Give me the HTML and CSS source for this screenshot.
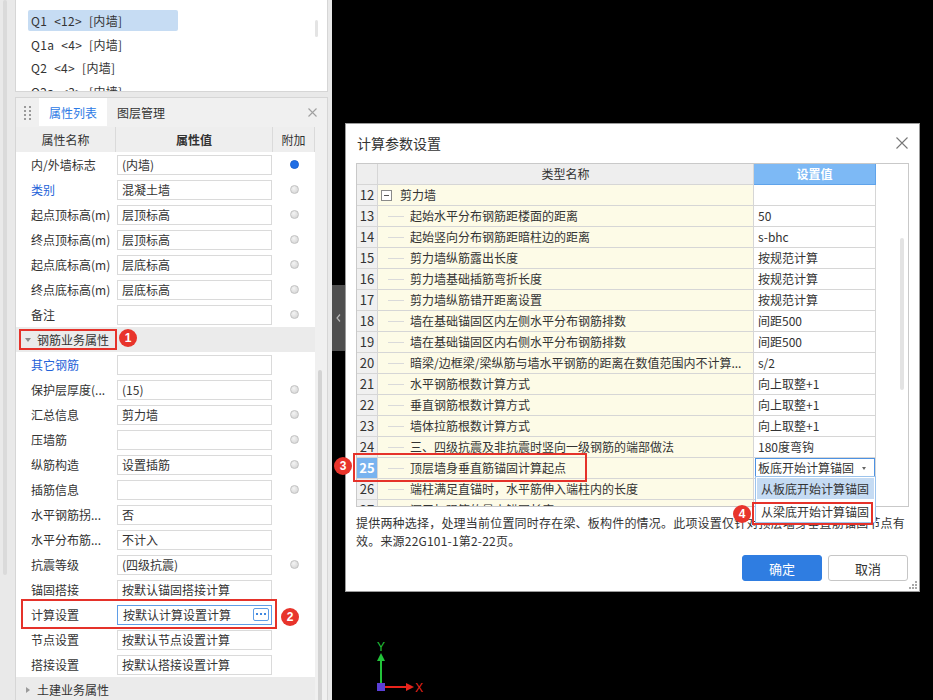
FILE: index.html
```html
<!DOCTYPE html>
<html lang="zh-CN">
<head>
<meta charset="utf-8">
<title>计算参数设置</title>
<link rel="stylesheet" href="styles.css">
</head>
<body>
<div class="app">
  <aside class="side">
    <div class="rail"><i class="rail-thumb"></i></div>
    <div class="side-main">
      <div class="list">
        <div class="list-items">
          <div class="li sel">Q1 &lt;12&gt; [内墙]</div>
          <div class="li">Q1a &lt;4&gt; [内墙]</div>
          <div class="li">Q2 &lt;4&gt; [内墙]</div>
          <div class="li">Q2a &lt;3&gt; [内墙]</div>
        </div>
        <div class="list-scroll"><i></i></div>
      </div>
      <div class="props">
        <div class="tabs">
          <span class="grip"><svg width="8" height="15" viewBox="0 0 8 15"><g fill="#9a9a9a"><rect x="0" y="0" width="2" height="2"/><rect x="5" y="0" width="2" height="2"/><rect x="0" y="4" width="2" height="2"/><rect x="5" y="4" width="2" height="2"/><rect x="0" y="8" width="2" height="2"/><rect x="5" y="8" width="2" height="2"/><rect x="0" y="12" width="2" height="2"/><rect x="5" y="12" width="2" height="2"/></g></svg></span>
          <span class="tab on">属性列表</span>
          <span class="tab">图层管理</span>
          <span class="tclose"><svg width="9" height="9" viewBox="0 0 9 9"><path d="M0.5 0.5L8.5 8.5M8.5 0.5L0.5 8.5" stroke="#a0a0a0" stroke-width="1.1"/></svg></span>
        </div>
        <div class="pbody">
          <div class="pgrid">
            <div class="prow phead"><span>属性名称</span><span class="bold">属性值</span><span>附加</span></div>
            <div class="prow"><span class="lab">内/外墙标志</span><span class="val">(内墙)</span><span class="add"><i class="dot on"></i></span></div>
            <div class="prow"><span class="lab blue">类别</span><span class="val">混凝土墙</span><span class="add"><i class="dot"></i></span></div>
            <div class="prow"><span class="lab">起点顶标高(m)</span><span class="val">层顶标高</span><span class="add"><i class="dot"></i></span></div>
            <div class="prow"><span class="lab">终点顶标高(m)</span><span class="val">层顶标高</span><span class="add"><i class="dot"></i></span></div>
            <div class="prow"><span class="lab">起点底标高(m)</span><span class="val">层底标高</span><span class="add"><i class="dot"></i></span></div>
            <div class="prow"><span class="lab">终点底标高(m)</span><span class="val">层底标高</span><span class="add"><i class="dot"></i></span></div>
            <div class="prow"><span class="lab">备注</span><span class="val"></span><span class="add"><i class="dot"></i></span></div>
            <div class="pgrp"><i class="caret-down"></i><span>钢筋业务属性</span></div>
            <div class="prow"><span class="lab blue">其它钢筋</span><span class="val"></span><span class="add"></span></div>
            <div class="prow"><span class="lab">保护层厚度(...</span><span class="val">(15)</span><span class="add"><i class="dot"></i></span></div>
            <div class="prow"><span class="lab">汇总信息</span><span class="val">剪力墙</span><span class="add"><i class="dot"></i></span></div>
            <div class="prow"><span class="lab">压墙筋</span><span class="val"></span><span class="add"><i class="dot"></i></span></div>
            <div class="prow"><span class="lab">纵筋构造</span><span class="val">设置插筋</span><span class="add"><i class="dot"></i></span></div>
            <div class="prow"><span class="lab">插筋信息</span><span class="val"></span><span class="add"><i class="dot"></i></span></div>
            <div class="prow"><span class="lab">水平钢筋拐...</span><span class="val">否</span><span class="add"></span></div>
            <div class="prow"><span class="lab">水平分布筋...</span><span class="val">不计入</span><span class="add"></span></div>
            <div class="prow"><span class="lab">抗震等级</span><span class="val">(四级抗震)</span><span class="add"><i class="dot"></i></span></div>
            <div class="prow"><span class="lab">锚固搭接</span><span class="val">按默认锚固搭接计算</span><span class="add"></span></div>
            <div class="prow"><span class="lab">计算设置</span><span class="val focus"><span>按默认计算设置计算</span><span class="more"><svg width="10" height="3" viewBox="0 0 10 3"><g fill="#3f87e0"><rect x="0" y="0" width="2" height="2"/><rect x="4" y="0" width="2" height="2"/><rect x="8" y="0" width="2" height="2"/></g></svg></span></span><span class="add"></span></div>
            <div class="prow"><span class="lab">节点设置</span><span class="val">按默认节点设置计算</span><span class="add"></span></div>
            <div class="prow"><span class="lab">搭接设置</span><span class="val">按默认搭接设置计算</span><span class="add"></span></div>
            <div class="pgrp"><i class="caret-right"></i><span>土建业务属性</span></div>
          </div>
          <div class="pscroll"><i></i></div>
        </div>
      </div>
    </div>
    <div class="redbox rb1"></div><span class="badge b1">1</span>
    <div class="redbox rb2"></div><span class="badge b2">2</span>
  </aside>

  <main class="canvas">
    <div class="handle"><svg width="5" height="8" viewBox="0 0 5 8"><path d="M4 0.5L1 4L4 7.5" stroke="#b5b5b5" stroke-width="1.2" fill="none"/></svg></div>

    <div class="dialog">
      <div class="dtitle">
        <span>计算参数设置</span>
        <svg width="12" height="12" viewBox="0 0 12 12"><path d="M0.5 0.5L11.5 11.5M11.5 0.5L0.5 11.5" stroke="#777" stroke-width="1.1"/></svg>
      </div>
      <div class="tbl">
        <div class="tgrid">
          <div class="trow thead"><span class="tnum"></span><span class="tname-h">类型名称</span><span class="tval-h">设置值</span></div>
          <div class="trow"><span class="tnum">12</span><span class="tname root"><i class="minus"></i>剪力墙</span><span class="tval"></span></div>
          <div class="trow"><span class="tnum">13</span><span class="tname"><i class="tl"></i>起始水平分布钢筋距楼面的距离</span><span class="tval">50</span></div>
          <div class="trow"><span class="tnum">14</span><span class="tname"><i class="tl"></i>起始竖向分布钢筋距暗柱边的距离</span><span class="tval">s-bhc</span></div>
          <div class="trow"><span class="tnum">15</span><span class="tname"><i class="tl"></i>剪力墙纵筋露出长度</span><span class="tval">按规范计算</span></div>
          <div class="trow"><span class="tnum">16</span><span class="tname"><i class="tl"></i>剪力墙基础插筋弯折长度</span><span class="tval">按规范计算</span></div>
          <div class="trow"><span class="tnum">17</span><span class="tname"><i class="tl"></i>剪力墙纵筋错开距离设置</span><span class="tval">按规范计算</span></div>
          <div class="trow"><span class="tnum">18</span><span class="tname"><i class="tl"></i>墙在基础锚固区内左侧水平分布钢筋排数</span><span class="tval">间距500</span></div>
          <div class="trow"><span class="tnum">19</span><span class="tname"><i class="tl"></i>墙在基础锚固区内右侧水平分布钢筋排数</span><span class="tval">间距500</span></div>
          <div class="trow"><span class="tnum">20</span><span class="tname"><i class="tl"></i>暗梁/边框梁/梁纵筋与墙水平钢筋的距离在数值范围内不计算...</span><span class="tval">s/2</span></div>
          <div class="trow"><span class="tnum">21</span><span class="tname"><i class="tl"></i>水平钢筋根数计算方式</span><span class="tval">向上取整+1</span></div>
          <div class="trow"><span class="tnum">22</span><span class="tname"><i class="tl"></i>垂直钢筋根数计算方式</span><span class="tval">向上取整+1</span></div>
          <div class="trow"><span class="tnum">23</span><span class="tname"><i class="tl"></i>墙体拉筋根数计算方式</span><span class="tval">向上取整+1</span></div>
          <div class="trow"><span class="tnum">24</span><span class="tname"><i class="tl"></i>三、四级抗震及非抗震时竖向一级钢筋的端部做法</span><span class="tval">180度弯钩</span></div>
          <div class="trow"><span class="tnum cur">25</span><span class="tname"><i class="tl"></i>顶层墙身垂直筋锚固计算起点</span><span class="tval combo-cell"><span class="combo"><span>板底开始计算锚固</span><i class="combo-arrow"></i></span></span></div>
          <div class="trow"><span class="tnum">26</span><span class="tname"><i class="tl"></i>端柱满足直锚时，水平筋伸入端柱内的长度</span><span class="tval"></span></div>
          <div class="trow"><span class="tnum">27</span><span class="tname"><i class="tl"></i>洞口加强筋的最小锚固长度</span><span class="tval"></span></div>
        </div>
        <div class="tscroll"><i></i></div>
      </div>
      <p class="desc">提供两种选择，处理当前位置同时存在梁、板构件的情况。此项设置仅针对顶层墙身垂直筋锚固节点有<br>效。来源22G101-1第2-22页。</p>
      <div class="dfoot">
        <button class="btn primary">确定</button>
        <button class="btn">取消</button>
      </div>
      <svg class="resize" width="8" height="8" viewBox="0 0 8 8"><g fill="#a8a8a8"><rect x="6" y="0" width="2" height="2"/><rect x="3" y="3" width="2" height="2"/><rect x="6" y="3" width="2" height="2"/><rect x="0" y="6" width="2" height="2"/><rect x="3" y="6" width="2" height="2"/><rect x="6" y="6" width="2" height="2"/></g></svg>

      <div class="dropdown">
        <div class="opt hover">从板底开始计算锚固</div>
        <div class="opt">从梁底开始计算锚固</div>
      </div>
      <div class="redbox rb3"></div><span class="badge b3">3</span>
      <div class="redbox rb4"></div><span class="badge b4">4</span>
    </div>

    <svg class="axis" width="60" height="60" viewBox="0 0 60 60">
      <text x="11" y="13" class="ax-y" text-anchor="middle">Y</text>
      <polygon points="11,15 7,23 15,23" fill="#22c33a"/>
      <line x1="11" y1="22" x2="11" y2="46" stroke="#22c33a" stroke-width="2"/>
      <line x1="15" y1="49" x2="38" y2="49" stroke="#e8241c" stroke-width="2"/>
      <polygon points="44,49 36,45 36,53" fill="#e8241c"/>
      <text x="49" y="54" class="ax-x" text-anchor="middle">X</text>
      <rect x="7" y="45" width="8" height="8" fill="#5a3fd6"/>
    </svg>
  </main>
</div>
</body>
</html>
```

FILE: styles.css
```css
html, body {
  margin: 0;
  padding: 0;
}
body {
  width: 933px;
  height: 700px;
  overflow: hidden;
  background: #000;
  font-family: "Noto Sans CJK SC", "Microsoft YaHei", "Liberation Sans", sans-serif;
  font-size: 12px;
  color: #333;
}
.app {
  display: flex;
  height: 700px;
}

/* ---------- left side ---------- */
.side {
  position: relative;
  width: 332px;
  flex: none;
  display: flex;
  background: #e9e9e9;
  overflow: hidden;
}
.rail {
  width: 15px;
  flex: none;
  box-sizing: border-box;
  padding-left: 3px;
}
.rail-thumb {
  display: block;
  width: 4px;
  height: 575px;
  border-radius: 2px;
  background: #dadada;
}
.side-main {
  width: 313px;
  flex: none;
  display: flex;
  flex-direction: column;
  overflow: hidden;
}
.list {
  height: 92px;
  flex: none;
  box-sizing: border-box;
  display: flex;
  background: #fff;
  border: 1px solid #d6d6d6;
  border-top: none;
  overflow: hidden;
}
.list-items {
  flex: 1;
  padding: 10px 0 0 12px;
}
.li {
  width: 150px;
  height: 21px;
  line-height: 21px;
  margin-bottom: 2.5px;
  padding-left: 3px;
  box-sizing: border-box;
  border-radius: 2px;
  color: #333;
  white-space: nowrap;
  word-spacing: 4px;
  letter-spacing: 0.3px;
}
.li.sel {
  background: #c6dcf3;
}
.list-scroll {
  width: 12px;
  flex: none;
  padding-top: 20px;
}
.list-scroll i {
  display: block;
  width: 3px;
  height: 17px;
  border-radius: 2px;
  background: #e4e4e4;
}

.props {
  flex: 1;
  margin-top: 5px;
  border: 1px solid #d6d6d6;
  border-bottom: none;
  background: #f0f0f0;
  display: flex;
  flex-direction: column;
  min-height: 0;
}
.tabs {
  height: 29px;
  flex: none;
  display: flex;
  align-items: stretch;
}
.grip {
  width: 23px;
  display: flex;
  align-items: center;
  justify-content: center;
  padding-top: 1px;
}
.tab {
  width: 68px;
  display: flex;
  align-items: center;
  justify-content: center;
  color: #333;
}
.tab.on {
  background: #fff;
  color: #2d7ae5;
  height: 28px;
}
.tclose {
  margin-left: auto;
  width: 30px;
  display: flex;
  align-items: center;
  justify-content: center;
}
.pbody {
  flex: 1;
  display: flex;
  min-height: 0;
}
.pgrid {
  width: 299px;
  flex: none;
  background: #fff;
}
.pscroll {
  flex: 1;
  padding: 243px 0 0 3px;
}
.pscroll i {
  display: block;
  width: 4px;
  height: 400px;
  border-radius: 2px;
  background: #d3d3d3;
}
.prow {
  display: grid;
  grid-template-columns: 100px 157px 42px;
  height: 25px;
  align-items: center;
}
.phead {
  background: #eeeeee;
}
.phead span {
  height: 25px;
  line-height: 25px;
  text-align: center;
  border-right: 1px solid #dadada;
  box-sizing: border-box;
}
.bold {
  font-weight: bold;
}
.lab {
  padding-left: 15px;
  white-space: nowrap;
  overflow: hidden;
}
.blue {
  color: #2462d8;
}
.val {
  margin-left: 1px;
  width: 155px;
  height: 20px;
  box-sizing: border-box;
  border: 1px solid #dadada;
  padding-left: 4px;
  line-height: 18px;
  white-space: nowrap;
  overflow: hidden;
}
.val.focus {
  display: flex;
  align-items: center;
  justify-content: space-between;
  padding-left: 5px;
  border-color: #5f9de6;
}
.more {
  width: 16px;
  height: 13px;
  box-sizing: border-box;
  border: 1px solid #5f9de6;
  border-radius: 2px;
  margin-right: 2px;
  display: flex;
  align-items: center;
  justify-content: center;
  background: #fff;
}
.add {
  display: flex;
  align-items: center;
  justify-content: center;
}
.dot {
  width: 9px;
  height: 9px;
  box-sizing: border-box;
  border-radius: 50%;
  border: 1px solid #c2c2c2;
  background: radial-gradient(circle at 40% 35%, #f4f4f4, #d0d0d0);
}
.dot.on {
  border-color: #1a62d0;
  background: #1f6ee6;
}
.pgrp {
  height: 25px;
  display: flex;
  align-items: center;
  background: #ebebeb;
  padding-left: 9px;
}
.caret-down {
  width: 0;
  height: 0;
  border-left: 3px solid transparent;
  border-right: 3px solid transparent;
  border-top: 4px solid #8a8a8a;
  margin-right: 6px;
}
.caret-right {
  width: 0;
  height: 0;
  border-top: 3px solid transparent;
  border-bottom: 3px solid transparent;
  border-left: 4px solid #9a9a9a;
  margin: 0 7px 0 1px;
}

/* annotations */
.redbox {
  position: absolute;
  box-sizing: border-box;
  border: 2px solid #e5322a;
  pointer-events: none;
}
.badge {
  position: absolute;
  width: 18px;
  height: 18px;
  border-radius: 50%;
  background: #e8342b;
  color: #fff;
  font-weight: bold;
  font-size: 12px;
  line-height: 18px;
  text-align: center;
  font-family: "Liberation Sans", "Noto Sans", sans-serif;
}
.rb1 { left: 19px; top: 329px; width: 98px; height: 21px; }
.b1 { left: 119px; top: 329px; }
.rb2 { left: 21px; top: 599px; width: 256px; height: 30px; }
.b2 { left: 281px; top: 608px; }

/* ---------- canvas ---------- */
.canvas {
  flex: 1;
  position: relative;
  background: #000;
}
.handle {
  position: absolute;
  left: 0;
  top: 285px;
  width: 13px;
  height: 66px;
  background: #4f4f4f;
  display: flex;
  align-items: center;
  justify-content: center;
}
.axis {
  position: absolute;
  left: 38px;
  top: 638px;
}
.ax-y {
  fill: #22c33a;
  font-size: 12px;
  font-family: "Liberation Sans", sans-serif;
}
.ax-x {
  fill: #e8241c;
  font-size: 12px;
  font-family: "Liberation Sans", sans-serif;
}

/* ---------- dialog ---------- */
.dialog {
  position: absolute;
  left: 13px;
  top: 123px;
  width: 575px;
  height: 469px;
  box-sizing: border-box;
  background: #fff;
  border: 1px solid #9c9c9c;
  display: flex;
  flex-direction: column;
}
.dtitle {
  height: 39px;
  flex: none;
  display: flex;
  align-items: center;
  justify-content: space-between;
  padding: 0 11px 2px 11px;
  box-sizing: border-box;
  font-size: 14px;
  color: #333;
}
.tbl {
  margin-left: 10px;
  width: 553px;
  height: 344px;
  flex: none;
  box-sizing: border-box;
  border: 1px solid #c9c9c9;
  display: flex;
  overflow: hidden;
}
.tgrid {
  width: 519px;
  flex: none;
}
.trow {
  display: grid;
  grid-template-columns: 21px 376px 122px;
  height: 21px;
}
.trow > span {
  box-sizing: border-box;
  border-right: 1px solid #d6d6d6;
  border-bottom: 1px solid #d6d6d6;
  line-height: 20px;
  white-space: nowrap;
  overflow: hidden;
}
.tnum {
  background: #f0f0f0;
  text-align: center;
  font-size: 13px;
}
.tnum.cur {
  background: #78b3ef;
  color: #fff;
  font-weight: bold;
}
.thead .tnum,
.tname-h {
  background: #eeeeee;
  text-align: center;
}
.tval-h {
  background: #7db9f5;
  color: #fff;
  font-weight: bold;
  text-align: center;
  border-color: #5fa3ea !important;
}
.tname {
  background: #fdfbe7;
  display: flex;
  align-items: center;
  padding-left: 10px;
}
.tname.root {
  padding-left: 3px;
}
.tl {
  width: 16px;
  height: 1px;
  background: #dadada;
  margin-right: 6px;
  flex: none;
}
.minus {
  position: relative;
  width: 11px;
  height: 11px;
  box-sizing: border-box;
  border: 1px solid #8a8a8a;
  margin-right: 8px;
  flex: none;
  background: #fff;
}
.minus::after {
  content: "";
  position: absolute;
  left: 2px;
  top: 4px;
  width: 5px;
  height: 1px;
  background: #555;
}
.tval {
  background: #fff;
  padding-left: 4px;
}
.tval.combo-cell {
  padding: 0;
}
.combo {
  height: 20px;
  box-sizing: border-box;
  border: 1px solid #4d92e2;
  margin-left: 1px;
  display: flex;
  align-items: center;
  padding-left: 2px;
  line-height: 18px;
}
.combo-arrow {
  margin-left: 8px;
  width: 0;
  height: 0;
  border-left: 2.5px solid transparent;
  border-right: 2.5px solid transparent;
  border-top: 3px solid #666;
}
.tscroll {
  flex: 1;
  padding: 74px 0 0 24px;
  background: #fff;
}
.tscroll i {
  display: block;
  width: 4px;
  height: 152px;
  border-radius: 2px;
  background: #e3e3e3;
}
.desc {
  margin: 7px 0 0 10px;
  line-height: 18px;
  white-space: nowrap;
  color: #333;
  letter-spacing: 0.2px;
}
.dfoot {
  margin-top: auto;
  display: flex;
  justify-content: flex-end;
  gap: 6px;
  padding: 0 11px 10px 0;
}
.btn {
  width: 80px;
  height: 26px;
  box-sizing: border-box;
  border: 1px solid #c6c6c6;
  border-radius: 3px;
  background: #fff;
  color: #333;
  font-family: inherit;
  font-size: 13px;
  padding: 0;
}
.btn.primary {
  background: #2f7de1;
  border-color: #2f7de1;
  color: #fff;
}
.resize {
  position: absolute;
  right: 2px;
  bottom: 2px;
}
.dropdown {
  position: absolute;
  left: 409px;
  top: 352px;
  width: 121px;
  height: 47px;
  box-sizing: border-box;
  border: 1px solid #9cc3ec;
  background: #fff;
  padding: 1px;
}
.opt {
  height: 21px;
  line-height: 21px;
  padding-left: 4px;
  margin-bottom: 2px;
  white-space: nowrap;
}
.opt.hover {
  background: #c5dbf3;
}
.rb3 { left: 7px; top: 329px; width: 234px; height: 29px; }
.b3 { left: -12px; top: 333px; }
.rb4 { left: 406px; top: 378px; width: 121px; height: 23px; }
.b4 { left: 387px; top: 381px; }
```
